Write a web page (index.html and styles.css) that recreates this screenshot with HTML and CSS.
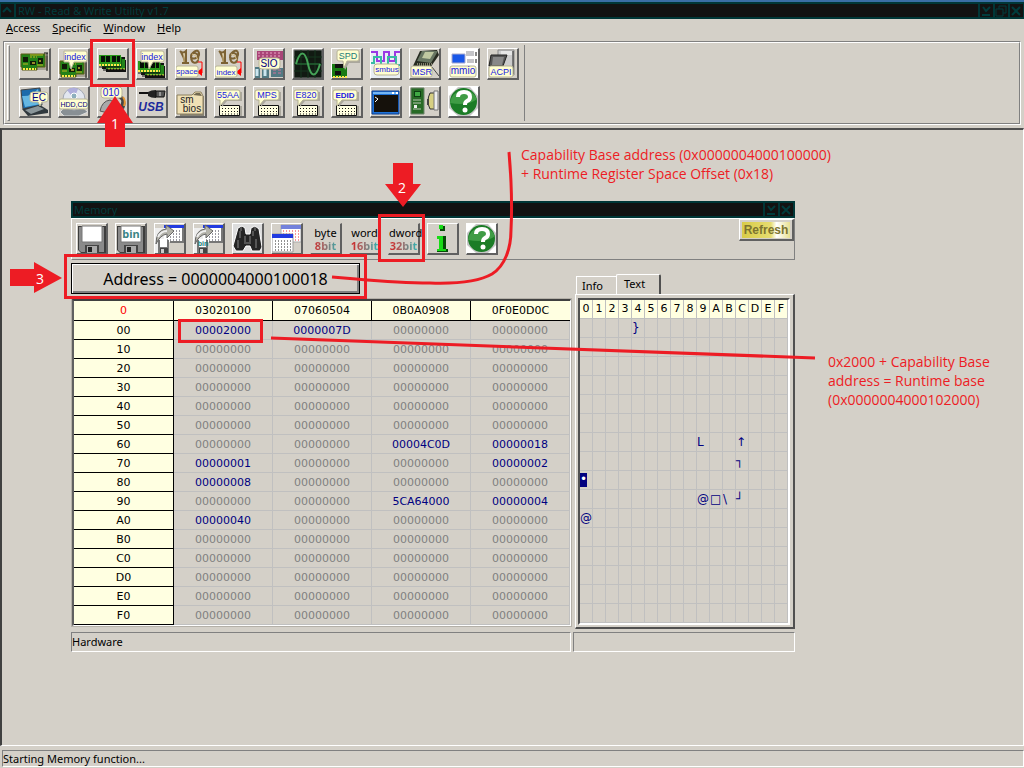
FILE: index.html
```html
<!DOCTYPE html>
<html lang="en">
<head>
<meta charset="utf-8">
<title>RW - Read &amp; Write Utility v1.7</title>
<link rel="stylesheet" href="styles.css">
</head>
<body>
<svg class="defs" aria-hidden="true">
  <symbol id="card" viewBox="0 0 29 29">
    <path d="M3 7h25v14H3z" fill="#a6a294"/>
    <path d="M1 5h24v13h-8v3H2v-3H1z" fill="#248018" stroke="#5d5a14"/>
    <path d="M3 8h5v5H3zM10 12h6v4h-6zM18 9h5v6h-5z" fill="#101c08"/>
    <path d="M10 8h2m1 0h2m1 0h1m-7-2h13M3 15h5M17 16h6" stroke="#c4b820"/>
    <path d="M12 13h3v2h-3zM19 11h2v2h-2z" fill="#9a8c28"/>
    <path d="M3 20h13" stroke="#ffe94a" stroke-width="2" stroke-dasharray="2 1"/>
    <path d="M27 4v18M24 4h4" stroke="#111" stroke-width="1"/>
  </symbol>
  <symbol id="dimm" viewBox="0 0 29 29">
    <path d="M5 8h22v3h1v12H8v-3H4z" fill="#111"/>
    <path d="M8 10h19v10H8z" fill="#23831a"/>
    <path d="M10 20h17" stroke="#ffe94a" stroke-dasharray="2 1"/>
    <path d="M4 8h20v10H4z" fill="#145e10"/>
    <path d="M1 6h22v11H1z" fill="#2c981c"/>
    <path d="M3 7h4v6H3zM8 7h4v6H8zM14 7h4v6h-4zM19 7h3v6h-3z" fill="#071007"/>
    <path d="M1 16h22" stroke="#ffe94a" stroke-width="2" stroke-dasharray="2 1"/>
    <path d="M1 18h22M5 21h21" stroke="#111"/>
  </symbol>
  <symbol id="keys" viewBox="0 0 29 29">
    <path d="M6 19h21v10H6z" fill="#aaa79d"/>
    <path d="M4.500 18.500h20v10h-20z" fill="#fffee0" stroke="#111"/>
    <path d="M7 21.500h16M7 24.500h16M7 27h16" stroke="#111" stroke-dasharray="1 2"/>
    <path d="M5 5h22v9H12l-5 6V14H5z" fill="#aaa79d"/>
    <path d="M3 3h20q2 0 2 2v6q0 2-2 2H10l-5 6V13H3q-2 0-2-2V5q0-2 2-2z" fill="#fffed0" stroke="#b4b092"/>
  </symbol>
  <symbol id="scroll" viewBox="0 0 29 29">
    <path d="M4 2q3 3 6 0v12M6 14h7M5 3q3 5 4 11" fill="none" stroke="#7c6234" stroke-width="2"/>
    <path d="M15 9c0-6 7-10 8-5s-8 8-8 3c0-5 9-4 7 4-1 4-6 4-7-2" fill="none" stroke="#7c6234" stroke-width="2"/>
    <path d="M8 4v9M16 5q5 1 6 6" fill="none" stroke="#d5bd83"/>
    <path d="M22 13h4v11h-4" fill="none" stroke="#f00"/><path d="M21 23l5-4v8z" fill="#f00"/>
  </symbol>
  <symbol id="help" viewBox="0 0 29 29">
    <path d="M0 0h29v29H0z" fill="#fff"/><path d="M0 9L9 0h12l8 9v12l-8 8H9l-9-8z" fill="#c6c6c6"/>
    <circle cx="14.500" cy="14.500" r="13.500" fill="#1b7c26"/>
    <path d="M1 16a14 14 0 0 1 27-4q-8 7-27 4z" fill="#3f9c45"/>
    <path d="M9 10q0-5 6-5t6 5q0 3-3 4-2 1-2 4" fill="none" stroke="#fff" stroke-width="4"/>
    <circle cx="16" cy="23" r="2.500" fill="#fff"/>
  </symbol>
  <symbol id="floppy" viewBox="0 0 29 29">
    <path d="M1 2h28v27H4l-3-3z" fill="#3d3d3d"/><path d="M2 3h25v25H4l-2-2z" fill="#8a8a8a"/>
    <path d="M5 2h20v16H5z" fill="#fff" stroke="#777"/><path d="M8 21h14v8H8z" fill="#444"/>
    <path d="M10 22h10v7H10z" fill="#aaa"/><path d="M11 23h4v5h-4z" fill="#222"/>
  </symbol>
  <symbol id="export" viewBox="0 0 29 29">
    <path d="M0 4h9v25H0z" fill="#eee"/><path d="M9 1h19v17H9z" fill="#fff"/>
    <path d="M9 1h20v3H9z" fill="#223be0"/>
    <path d="M12 7h15M12 10h15M12 13h15M12 16h15" stroke="#334" stroke-dasharray="1 2"/>
    <path d="M28 4v14H15" fill="none" stroke="#777" stroke-width="2"/>
    <path d="M3 16h11v13H3z" fill="#777"/><path d="M5 15h7v8H5z" fill="#fff"/><path d="M5 24h8v5H5z" fill="#444"/><path d="M6 25h3v4H6z" fill="#ccc"/>
    <path d="M1 20Q1 6 11 5V1l8 6-7 7v-4Q5 11 1 20z" fill="#b4b3aa" stroke="#666"/>
    <path d="M3 13q3-6 9-6" stroke="#eee" stroke-width="2" fill="none"/>
  </symbol>
</svg>

<div class="app">
  <header class="titlebar">
    <button class="cap" aria-label="System menu"><svg viewBox="0 0 12 12"><path d="M2 7l4-4 4 4"/></svg></button>
    <h1 class="caption">RW - Read &amp; Write Utility v1.7</h1>
    <button class="cap" aria-label="Minimize"><svg viewBox="0 0 12 12"><path d="M3 2l3 4 4-4M2 10h8"/></svg></button>
    <button class="cap" aria-label="Restore"><svg viewBox="0 0 12 12"><path class="thin" d="M4 4V1h7v7H8M1 4h7v7H1z"/></svg></button>
    <button class="cap" aria-label="Close"><svg viewBox="0 0 12 12"><path d="M2 2l8 8M10 2l-8 8"/></svg></button>
  </header>
  <nav class="menu">
    <button><u>A</u>ccess</button><button><u>S</u>pecific</button><button><u>W</u>indow</button><button><u>H</u>elp</button>
  </nav>
  <div class="rebar">
    <div class="band">
      <span class="grip"></span>
      <div class="tools">
        <button class="tool" aria-label="PCI"><svg viewBox="0 0 29 29"><use href="#card"/></svg></button>
        <button class="tool" aria-label="PCI index"><svg viewBox="0 0 29 29"><use href="#card" y="7"/><path class="bub" d="M5 2h21q2 0 2 2v7q0 2-2 2H15l-3 7-2-7H5z"/><text x="16" y="11" class="t9">index</text></svg></button>
        <button class="tool" aria-label="Memory"><svg viewBox="0 0 29 29"><use href="#dimm"/></svg></button>
        <button class="tool" aria-label="Memory index"><svg viewBox="0 0 29 29"><use href="#dimm" y="6"/><path class="bub" d="M4 2h21q2 0 2 2v7q0 2-2 2H16l-4 7-1-7H4z"/><text x="15" y="11" class="t9">index</text></svg></button>
        <button class="tool" aria-label="IO space"><svg viewBox="0 0 29 29"><use href="#scroll"/><rect class="bub" x="0" y="17" width="22" height="11" rx="2"/><text x="11" y="25" class="t8">space</text></svg></button>
        <button class="tool" aria-label="IO index"><svg viewBox="0 0 29 29"><use href="#scroll"/><rect class="bub" x="0" y="17" width="22" height="11" rx="2"/><text x="11" y="26" class="t8">index</text></svg></button>
        <button class="tool" aria-label="Super IO"><svg viewBox="0 0 29 29"><path d="M3 2h26v9H3z" fill="#a94477"/><path d="M4 4h23M4 7h23" stroke="#eaa6c7" stroke-dasharray="2 2"/><path d="M1 18h5v11H1zM8 18h7v11H8zM17 19h12v9H17z" fill="#527a83"/><path d="M3 20v7M11 20v7" stroke="#cce6ef" stroke-width="3"/><path d="M19 21h8M19 24h8" stroke="#ce739c" stroke-dasharray="3 2"/><rect class="bub" x="5" y="9" width="21" height="11" rx="3"/><text x="15" y="18" class="t10 navy">SIO</text></svg></button>
        <button class="tool" aria-label="Clock generator"><svg viewBox="0 0 29 29"><path d="M1 1h28v28H1z" fill="#111a12" stroke="#777"/><path d="M1 8h28M1 15h28M1 22h28M8 1v28M15 1v28M22 1v28" stroke="#16361f"/><path d="M3 15h24" stroke="#2b7a3c"/><path d="M3 15C7 1 12 1 15 15s8 14 12 0" fill="none" stroke="#45a357" stroke-width="2"/></svg></button>
        <button class="tool" aria-label="SPD"><svg viewBox="0 0 29 29"><path d="M0 15h15v13H0z" fill="#197b14"/><path d="M3 15v4h8v-4M3 22h6v4H3z" fill="#111"/><path d="M1 28h14" stroke="#ffe94a" stroke-width="2" stroke-dasharray="2 1"/><path d="M8 4h20v10H17l-4 7z" fill="#aaa79d"/><path class="bub" d="M7 1h18q2 0 2 2v7q0 2-2 2H15l-3 7-1-7H7q-2 0-2-2V3q0-2 2-2z"/><text x="16" y="10" class="t9 teal">SPD</text></svg></button>
        <button class="tool" aria-label="SMBus"><svg viewBox="0 0 29 29"><path d="M0 0h29v29H0z" fill="#e8eef3"/><path d="M0 3h6v9h7V3h5v9h6V3h5" fill="none" stroke="#9b38e4" stroke-width="2"/><path d="M0 14h3V8h7v9h7V8h8v8h4" fill="none" stroke="#38bca3" stroke-width="2"/><rect class="bub" x="3" y="15" width="25" height="11" rx="3"/><text x="16" y="23" class="t8">smbus</text></svg></button>
        <button class="tool" aria-label="MSR"><svg viewBox="0 0 29 29"><path d="M3 17L10 2l17-1 2 5-9 13z" fill="#282c22"/><path d="M7 12L12 2h16l-7 12z" fill="#687663"/><path d="M12 9l3-6h9l-4 7z" fill="#bfc8a1"/><path d="M7 15h15M9 17h12" stroke="#ddd8b7" stroke-dasharray="1 1"/><path d="M22 18l7 9" stroke="#444"/><rect class="bub" x="1" y="17" width="21" height="11" rx="2"/><text x="12" y="26" class="t9">MSR</text></svg></button>
        <button class="tool" aria-label="MMIO"><svg viewBox="0 0 29 29"><path d="M0 0h29v29H0z" fill="#fff"/><path d="M3 5h13v9H3z" fill="#1957e8" stroke="#aac" /><path d="M17 2h8v5h-8zM18 10h7v4h-7z" fill="#c4c4c8"/><path d="M27 3v4M27 10v4" stroke="#111"/><rect class="bub" x="1" y="17" width="26" height="11" rx="2"/><text x="14" y="25" class="t10">mmio</text></svg></button>
        <button class="tool" aria-label="ACPI"><svg viewBox="0 0 29 29"><path d="M10 1h16v25H10z" fill="#ccc" stroke="#888"/><path d="M13 3h11M13 5h11" stroke="#fff"/><path d="M25 2v23" stroke="#222"/><path d="M3 6h16l-4 11H1z" fill="#555" stroke="#222"/><path d="M5 8h11l-2 8H4z" fill="#888"/><rect class="bub" x="1" y="17" width="24" height="11" rx="2"/><text x="13" y="26" class="t9">ACPI</text></svg></button>
        <button class="tool" aria-label="Embedded controller"><svg viewBox="0 0 29 29"><path d="M1 3l19-2 2 17L3 22z" fill="#1c6bab" stroke="#444"/><path d="M2 9q9 1 16-7l3 15-16 3z" fill="#65b7e2"/><path d="M2 22l18-4 8 5v3L8 29z" fill="#30383d"/><path d="M5 23l13-4 6 3-13 5z" fill="#8b969a"/><path class="bub" d="M13 5h12q3 0 3 3v5q0 2-3 2h-3l-2 4-2-4h-5q-3 0-3-2V8q0-3 3-3z"/><text x="19" y="14" class="t10 navy">EC</text></svg></button>
        <button class="tool" aria-label="Disk"><svg viewBox="0 0 29 29"><path d="M1 25l6-6h15l7 6-9 4H5z" fill="#888f94" stroke="#ddd"/><circle cx="15" cy="12" r="11" fill="#e2e6ef" stroke="#a2a8b2"/><path d="M15 12L8 3q6-4 11-1z" fill="#afaedb"/><circle cx="15" cy="9" r="3" fill="#8eafbd" stroke="#fff"/><rect class="bub" x="0" y="12" width="29" height="10" rx="2"/><text x="15" y="20" class="t7 navy">HDD,CD</text></svg></button>
        <button class="tool" aria-label="Binary"><svg viewBox="0 0 29 29"><path d="M2 24q2-10 10-11l6 3q-9 0-8 10z" fill="#a9a9a9" stroke="#555"/><path d="M23 8q7 6 3 14l-5-2q5-7-1-9z" fill="#444"/><path d="M25 10q3 4 1 9" fill="none" stroke="#e49532" stroke-width="2"/><rect class="bub" x="3" y="0" width="21" height="11" rx="3"/><text x="13" y="9" class="t10">010</text></svg></button>
        <button class="tool" aria-label="USB"><svg viewBox="0 0 29 29"><path d="M2 6h10" stroke="#111" stroke-width="2"/><path d="M11 5q3-2 8-2v8q-5 0-8-2z" fill="#222"/><path d="M19 4h9l-1 6h-8z" fill="#555" stroke="#111"/><path d="M23 5v4" stroke="#ddd"/><text x="14" y="24" class="usb">USB</text></svg></button>
        <button class="tool" aria-label="SMBIOS"><svg viewBox="0 0 29 29"><path d="M4 9h24v20H4z" fill="#888477"/><path d="M1 8h15l3-3h6l2 4v18H1z" fill="#efe0b5" stroke="#8c8061"/><path d="M17 8l3-2h4l2 3z" fill="#706850"/><text x="11" y="16" class="t10 ink">sm</text><text x="16" y="25" class="t10 ink">bios</text></svg></button>
        <button class="tool" aria-label="55AA"><svg viewBox="0 0 29 29"><use href="#keys"/><text x="13" y="11" class="t9">55AA</text></svg></button>
        <button class="tool" aria-label="MPS"><svg viewBox="0 0 29 29"><use href="#keys"/><text x="13" y="11" class="t9">MPS</text></svg></button>
        <button class="tool" aria-label="E820"><svg viewBox="0 0 29 29"><use href="#keys"/><text x="13" y="11" class="t9">E820</text></svg></button>
        <button class="tool" aria-label="EDID"><svg viewBox="0 0 29 29"><use href="#keys"/><text x="13" y="11" class="t8 bold">EDID</text></svg></button>
        <button class="tool" aria-label="Command"><svg viewBox="0 0 29 29"><path d="M1 4h27v23H1z" fill="#1e72d8" stroke="#0c3d8c"/><path d="M2 5h25v2H2z" fill="#73b6f5"/><path d="M21 5h2v2h-2zM25 5h2v2h-2z" fill="#fff"/><path d="M3 8h24v17H3z" fill="#15110b"/><path d="M4 10l3 2-3 3" fill="none" stroke="#fff"/></svg></button>
        <button class="tool" aria-label="Remote"><svg viewBox="0 0 29 29"><path d="M1 1h13v26H1z" fill="#286b26" stroke="#6c826a"/><path d="M4 4h7v6H4z" fill="#0d3e12"/><path d="M5 5h5v4H5z" fill="#40a944"/><path d="M3 13h8M3 16h8M3 22h8" stroke="#b9c8b2"/><path d="M4 18h3v3H4z" fill="#eee"/><path d="M20 6h5v16h-5q-4-8 0-16z" fill="#d6cf82" stroke="#333"/><path d="M24 4h4v19h-4z" fill="#eee" stroke="#777"/><path d="M18 12v6" stroke="#444" stroke-width="2"/></svg></button>
        <button class="tool" aria-label="Help"><svg viewBox="0 0 29 29"><use href="#help"/></svg></button>
      </div>
    </div>
  </div>
  <main class="desktop"></main>
  <footer class="status"><span>Starting Memory function...</span></footer>

  <section class="window" aria-label="Memory">
    <div class="titlebar child">
      <h2 class="caption">Memory</h2>
      <button class="cap" aria-label="Minimize"><svg viewBox="0 0 12 12"><path d="M3 2l3 4 4-4M2 10h8"/></svg></button>
      <button class="cap" aria-label="Close"><svg viewBox="0 0 12 12"><path d="M2 2l8 8M10 2l-8 8"/></svg></button>
    </div>
    <div class="winbar">
      <div class="wintools">
        <button class="tool" aria-label="Save"><svg viewBox="0 0 29 29"><use href="#floppy"/></svg></button>
        <button class="tool" aria-label="Save binary"><svg viewBox="0 0 29 29"><use href="#floppy"/><text x="15" y="14" class="bin">bin</text></svg></button>
        <button class="tool" aria-label="Load"><svg viewBox="0 0 29 29"><use href="#export"/></svg></button>
        <button class="tool" aria-label="Load binary"><svg viewBox="0 0 29 29"><use href="#export"/><text x="9" y="22" class="t7 teal bold">bin</text></svg></button>
        <button class="tool" aria-label="Find"><svg viewBox="0 0 29 29"><path d="M0 0h29v29H0z" fill="#ddd"/><path d="M5 4l4-2 3 2 1 6h4l1-6 4-2 4 3 3 18-2 4h-8l-2-5h-4l-3 5H3l-3-5z" fill="#252525" stroke="#fff"/><path d="M7 7v7M5 16v8M20 7v5M23 15v9" stroke="#888" stroke-width="1"/><path d="M8 3v4M22 3v4M12 12v7h5v-7" stroke="#555" stroke-width="2" fill="none"/></svg></button>
        <button class="tool" aria-label="Compare"><svg viewBox="0 0 29 29"><path d="M9 1h20v17H9z" fill="#fff" stroke="#aaa"/><path d="M9 1h20v4H9z" fill="#7382dc"/><path d="M11 7h17M11 10h17M11 13h17M11 16h17" stroke="#e33" stroke-dasharray="1 2"/><path d="M0 10h21v18H0z" fill="#fff" stroke="#999"/><path d="M0 10h21v4H0z" fill="#223be0"/><path d="M3 17h16M3 20h16M3 23h16M3 26h16" stroke="#222" stroke-dasharray="1 2"/></svg></button>
        <button class="tool width">byte<b>8bit</b></button>
        <button class="tool width">word<b>16bit</b></button>
        <button class="tool width">dword<b>32bit</b></button>
        <button class="tool" aria-label="Information"><svg viewBox="0 0 29 29"><path d="M12 2h5v5h-5zM10 12h8v13h2v3H9v-3h4V15h-3z" fill="#064c08"/><path d="M11 1h4v4h-4zM9 12h6v13h3v2H9v-2h2V15H9z" fill="#18dc16"/></svg></button>
        <button class="tool" aria-label="Help"><svg viewBox="0 0 29 29"><use href="#help"/></svg></button>
      </div>
      <button class="refresh"><span>Refresh</span></button>
    </div>
    <div class="panes">
      <div class="left">
        <button class="address">Address = 0000004000100018</button>
        <div class="sunken"><table class="hex" id="hex"></table></div>
      </div>
      <div class="right">
        <div class="tabs" role="tablist"><button role="tab">Info</button><button role="tab" class="on" aria-selected="true">Text</button></div>
        <div class="page"><table class="chars" id="chars"></table></div>
      </div>
    </div>
    <div class="winstatus"><span>Hardware</span><span></span></div>
  </section>

  <svg class="marks" viewBox="0 0 1024 768" aria-hidden="true">
    <g fill="none" stroke="#ed1c24" stroke-width="3">
      <path d="M91.500 40.500h42v45h-42zM379.500 215.500h44v45h-44zM65.500 255.500h300v42h-300zM179.500 320.500h82v21h-82z"/>
      <path d="M332 277L356 279C390 282 410 283 430 283C460 284 480 281 492 274C505 266 511 248 511 230C512 210 511 175 509 152M271 338L815 358"/>
    </g>
    <g fill="#ed1c24">
      <path d="M115 96l18 27h-8v24h-20v-24h-8z"/>
      <path d="M393 163h20v21h8l-18 23-18-23h8z"/>
      <path d="M10 269h24v-7l28 16-28 15v-7H10z"/>
    </g>
    <g class="num"><text x="115" y="129">1</text><text x="402" y="193">2</text><text x="40" y="284">3</text></g>
  </svg>
  <p class="note one">Capability Base address (0x0000004000100000)<br>+ Runtime Register Space Offset (0x18)</p>
  <p class="note two">0x2000 + Capability Base<br>address = Runtime base<br>(0x0000004000102000)</p>
</div>
<script src="tables.js"></script>
</body>
</html>
```

FILE: tables.js
```js
const zero = "00000000";
const digits = "0123456789ABCDEF".split("");
const memory = {
  0: ["00002000", "0000007D", zero, zero],
  6: [zero, zero, "00004C0D", "00000018"],
  7: ["00000001", zero, zero, "00000002"],
  8: ["00000008", zero, zero, zero],
  9: [zero, zero, "5CA64000", "00000004"],
  10: ["00000040", zero, zero, zero]
};
const glyphs = {
  0: { 4: "}" },
  6: { 9: "L", 12: "↑" },
  7: { 12: "┐" },
  8: { 0: "•" },
  9: { 9: "@", 10: "□", 11: "\\", 12: "┘" },
  10: { 0: "@" }
};

const hexHead = ["03020100", "07060504", "0B0A0908", "0F0E0D0C"];
document.getElementById("hex").innerHTML =
  `<thead><tr><th class="origin">0</th>${hexHead.map(h => `<th>${h}</th>`).join("")}</tr></thead><tbody>` +
  digits.map((d, r) => {
    const row = memory[r] || [zero, zero, zero, zero];
    return `<tr><th>${d}0</th>${row.map(v => `<td${v === zero ? "" : ' class="set"'}>${v}</td>`).join("")}</tr>`;
  }).join("") + "</tbody>";

document.getElementById("chars").innerHTML =
  `<thead><tr>${digits.map(d => `<th>${d}</th>`).join("")}</tr></thead><tbody>` +
  digits.map((d, r) => `<tr>${digits.map((e, c) => {
    const g = (glyphs[r] || {})[c] || "";
    return `<td>${g === "•" ? '<span class="inv">•</span>' : g}</td>`;
  }).join("")}</tr>`).join("") + "</tbody>";
```

FILE: styles.css
```css
* { box-sizing: border-box; }
body {
  margin: 0;
  background: #d4d0c8;
  color: #000;
  font: 11px/14px "Noto Sans", "DejaVu Sans", sans-serif;
}
button { font: inherit; color: inherit; background: none; border: 0; padding: 0; margin: 0; }
.defs { position: absolute; width: 0; height: 0; }
.app { position: relative; display: flex; flex-direction: column; min-height: 100vh; overflow: hidden; border-top: 2px solid #3a6ea5; }

.titlebar { display: flex; height: 17px; border: 2px solid #003737; background: #121212; color: #003c3c; }
.app > .titlebar { border-right-width: 1px; border-left-width: 1px; }
.caption { flex: 1; margin: 0; padding-left: 2px; font-size: 11px; font-weight: normal; line-height: 13px; white-space: nowrap; }
.cap { width: 15px; height: 13px; border-left: 2px solid #003737; }
.cap:first-child { border-left: 0; border-right: 2px solid #003737; }
.cap svg { display: block; width: 12px; height: 12px; fill: none; stroke: #003c3c; stroke-width: 2; }
.cap .thin { stroke-width: 1; }

.menu { display: flex; gap: 12px; height: 22px; padding: 2px 6px 6px; }

.rebar { margin: 0 3px 0 3px; border: 1px solid #808080; border-right-color: #fff; border-bottom-color: #fff; }
.band { display: flex; border: 1px solid #fff; border-right-color: #808080; border-bottom-color: #808080; padding: 2px 0; }
.grip { width: 3px; margin: 0 9px 0 2px; border: 1px solid #fff; border-right-color: #808080; border-bottom-color: #808080; }
.tools { display: grid; grid-template-columns: repeat(13, 32px); gap: 6px 7px; padding: 3px 5px 3px 0; border-right: 1px solid #808080; }
.tool { display: block; width: 32px; height: 32px; border: 1px solid #fff; border-right: 2px solid #606060; border-bottom: 2px solid #606060; overflow: hidden; }
.tool svg { display: block; width: 29px; height: 29px; }
.tool text { font-family: "Liberation Sans", sans-serif; text-anchor: middle; fill: #2020e0; }
.tool .t10 { font-size: 10px; }
.tool .t9 { font-size: 9px; }
.tool .t8 { font-size: 8px; }
.tool .t7 { font-size: 7px; }
.tool .navy { fill: #000080; }
.tool .teal { fill: #1c7c78; }
.tool .ink { fill: #222; }
.tool .bold { font-weight: bold; }
.tool .bin { font: bold 11px "Noto Sans", sans-serif; fill: #3c8484; }
.tool .usb { font: italic bold 12px "Liberation Sans", sans-serif; fill: #1c2a9c; }
.bub { fill: #fffed0; stroke: #b8b498; }

.desktop { flex: 1; margin-top: 3px; border: 2px solid #404040; border-top-color: #505050; border-right: 1px solid #fff; border-bottom: 1px solid #fff; }
.status { display: flex; padding: 4px 0 1px 2px; }
.status span { flex: 1; height: 17px; padding-top: 1px; border: 1px solid #808080; border-right-color: #fff; border-bottom-color: #fff; }

.window { position: absolute; left: 71px; top: 199px; width: 724px; }
.child .caption { line-height: 14px; padding-left: 1px; }
.winbar { display: flex; justify-content: space-between; align-items: flex-start; height: 42px; border: 1px solid #fff; border-right-color: #808080; border-bottom-color: #808080; }
.wintools { display: flex; gap: 7px; padding: 4px 0 0 4px; }
.tool.width { border-left-color: transparent; border-top-color: transparent; text-align: center; line-height: 13px; overflow: visible; white-space: nowrap; }
.tool.width b { display: block; color: transparent; background: linear-gradient(90deg, #d81c1c, #a06868 45%, #28b8b8); background-clip: text; -webkit-background-clip: text; }
.refresh { width: 55px; height: 22px; border: 1px solid #fff; border-right: 2px solid #606060; border-bottom: 2px solid #606060; padding: 2px; }
.refresh span { display: block; background: linear-gradient(90deg, #d8cc48, #e6dc70 60%, #fff 72%, #e8e090); color: #7c7430; font: bold 12px/16px "Liberation Sans", sans-serif; }
.panes { display: grid; grid-template-columns: 500px 1fr; column-gap: 4px; padding-top: 3px; }
.address { display: block; width: 289px; height: 31px; border: 1px solid #000; box-shadow: inset 1px 1px #fff, inset -2px -2px #808080; font-size: 16px; line-height: 28px; }
.sunken { margin: 5px 0 0 1px; border: 2px solid #606060; border-top-color: #404040; border-right: 1px solid #fff; border-bottom: 1px solid #fff; outline: 1px solid #b4b0a8; }
table { width: 100%; border-collapse: separate; border-spacing: 0; table-layout: fixed; }
th, td { height: 19px; padding: 0; font: 11px/18px "DejaVu Sans", sans-serif; text-align: center; }
th { background: #ffffe1; }
.hex th { border-right: 1px solid #000; border-bottom: 1px solid #000; }
.hex thead th { height: 20px; }
.hex tbody th, .hex td { padding-top: 1px; line-height: 17px; }
.hex .origin { width: 100px; color: #f00; }
.hex td { color: #808080; border-right: 1px solid #c0c0c0; border-bottom: 1px solid #c0c0c0; }
.hex .set { color: #000080; }
.hex thead th:last-child { border-right: 0; }
.right { padding-top: 11px; }
.tabs { display: flex; align-items: flex-end; height: 20px; padding-left: 1px; }
.tabs button { width: 40px; height: 18px; border: 1px solid #fff; border-bottom: 0; border-right: 0; padding-left: 5px; text-align: left; }
.tabs .on { width: 45px; height: 20px; border-right: 2px solid #505050; border-radius: 2px 2px 0 0; padding-left: 7px; padding-bottom: 2px; }
.page { border: 1px solid #fff; border-right: 2px solid #505050; border-bottom: 2px solid #505050; padding: 3px 3px 2px 2px; }
.chars { border: 2px solid #505050; border-right: 2px solid #fff; border-bottom: 2px solid #fff; }
.chars th, .chars td { border-right: 1px solid #c0c0c0; border-bottom: 1px solid #c0c0c0; }
.chars td { color: #000080; text-align: left; white-space: nowrap; font-size: 12px; line-height: 17px; }
.inv { display: block; width: 7px; height: 14px; background: #000080; color: #fff; line-height: 13px; }
.winstatus { display: grid; grid-template-columns: 500px 1fr; gap: 2px; padding-top: 3px; }
.winstatus span { height: 20px; padding-top: 2px; border: 1px solid #808080; border-right-color: #fff; border-bottom-color: #fff; }

.marks { position: absolute; left: 0; top: -2px; width: 1024px; height: 768px; pointer-events: none; }
.num { fill: #fff; font: 14px "Open Sans", sans-serif; text-anchor: middle; }
.note { position: absolute; margin: 0; color: #ed1c24; font: 14px/19px "Open Sans", sans-serif; white-space: nowrap; }
.one { left: 521px; top: 143px; }
.two { left: 828px; top: 350px; }
```
